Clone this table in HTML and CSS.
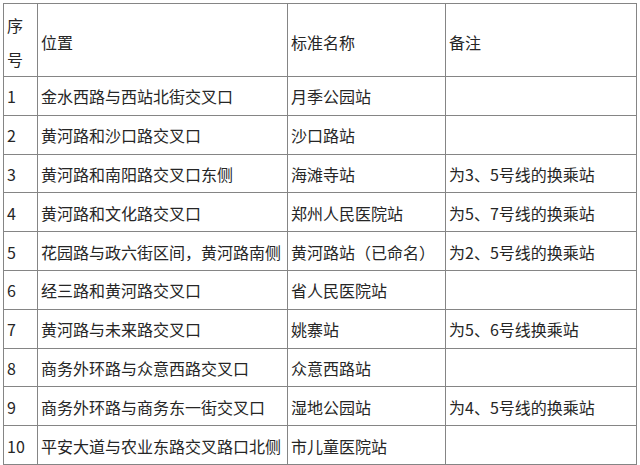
FILE: index.html
```html
<!DOCTYPE html>
<html lang="zh">
<head>
<meta charset="utf-8">
<link rel="stylesheet" href="styles.css">
</head>
<body>
<table class="grid">
  <colgroup>
    <col class="c-no"><col class="c-loc"><col class="c-name"><col class="c-note">
  </colgroup>
  <tr class="head"><td class="no-head">序<br>号</td><td>位置</td><td>标准名称</td><td>备注</td></tr>
  <tr><td>1</td><td>金水西路与西站北街交叉口</td><td>月季公园站</td><td></td></tr>
  <tr><td>2</td><td>黄河路和沙口路交叉口</td><td>沙口路站</td><td></td></tr>
  <tr><td>3</td><td>黄河路和南阳路交叉口东侧</td><td>海滩寺站</td><td>为3、5号线的换乘站</td></tr>
  <tr><td>4</td><td>黄河路和文化路交叉口</td><td>郑州人民医院站</td><td>为5、7号线的换乘站</td></tr>
  <tr><td>5</td><td>花园路与政六街区间，黄河路南侧</td><td>黄河路站（已命名）</td><td>为2、5号线的换乘站</td></tr>
  <tr><td>6</td><td>经三路和黄河路交叉口</td><td>省人民医院站</td><td></td></tr>
  <tr><td>7</td><td>黄河路与未来路交叉口</td><td>姚寨站</td><td>为5、6号线换乘站</td></tr>
  <tr><td>8</td><td>商务外环路与众意西路交叉口</td><td>众意西路站</td><td></td></tr>
  <tr><td>9</td><td>商务外环路与商务东一街交叉口</td><td>湿地公园站</td><td>为4、5号线的换乘站</td></tr>
  <tr><td>10</td><td>平安大道与农业东路交叉路口北侧</td><td>市儿童医院站</td><td></td></tr>
</table>
</body>
</html>
```
FILE: styles.css
```css
html, body {
  margin: 0;
  padding: 0;
  background: #ffffff;
}
body {
  padding: 3px 0 0 3px;
  font-family: "Noto Sans CJK SC", "Liberation Sans", sans-serif;
  font-size: 16px;
  color: #262626;
}
.grid {
  border-collapse: collapse;
  table-layout: fixed;
  width: 633px;
}
.c-no { width: 34px; }
.c-loc { width: 250px; }
.c-name { width: 158px; }
.c-note { width: 191px; }
.grid td {
  box-sizing: border-box;
  border: 1px solid #858585;
  padding: 1px 0 0 3px;
  height: 38.8px;
  line-height: 22px;
  vertical-align: middle;
  white-space: nowrap;
  overflow: hidden;
}
.grid .head td {
  height: 73px;
  padding-top: 3px;
}
.grid .head .no-head {
  line-height: 34px;
  padding-top: 3px;
}
```
